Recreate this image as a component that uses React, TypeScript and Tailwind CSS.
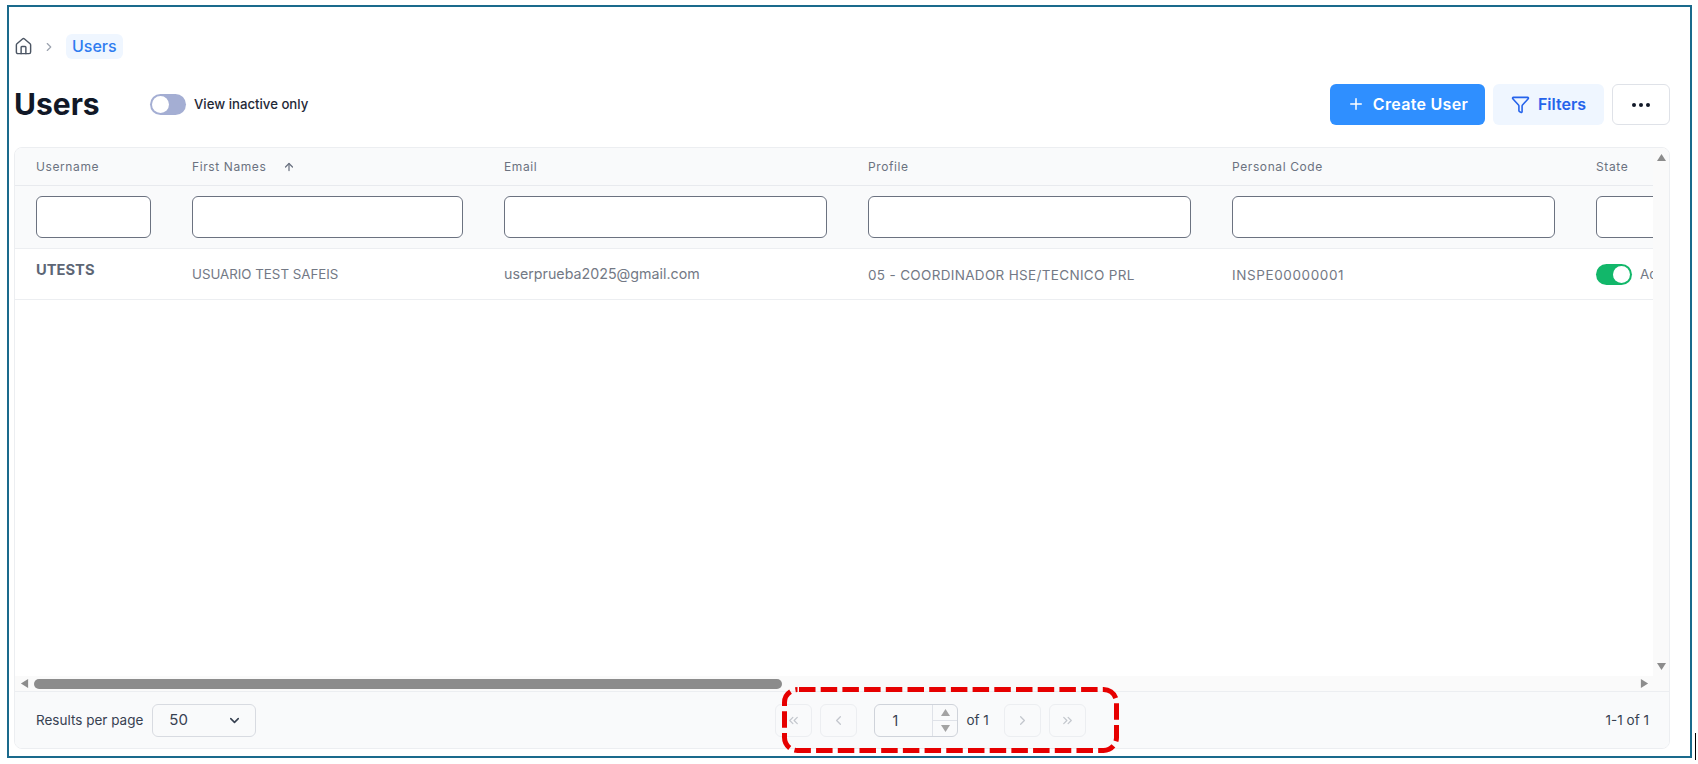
import { ArrowUp, ChevronDown, ChevronLeft, ChevronRight, ChevronsLeft, ChevronsRight, Filter, House, Plus } from "lucide-react";

const columns = [
  { label: "Username", width: "w-[156px]" },
  { label: "First Names", width: "w-[312px]", sorted: true },
  { label: "Email", width: "w-[364px]" },
  { label: "Profile", width: "w-[364px]" },
  { label: "Personal Code", width: "w-[364px]" },
  { label: "State", width: "w-[140px]" },
];

function Triangle({ dir, className }: { dir: "up" | "down" | "left" | "right"; className?: string }) {
  const points = {
    up: "5,1 10,9 0,9",
    down: "0,1 10,1 5,9",
    left: "9,0 9,10 1,5",
    right: "1,0 1,10 9,5",
  }[dir];
  return (
    <svg viewBox="0 0 10 10" className={className}>
      <polygon points={points} fill="currentColor" />
    </svg>
  );
}

function PageButton({ children }: { children: React.ReactNode }) {
  return (
    <button className="flex h-[33px] w-[37px] items-center justify-center rounded-md border border-[#eceef1] text-[#c3c7cd]">
      {children}
    </button>
  );
}

export default function App() {
  return (
    <div className="relative h-[764px] w-[1698px] overflow-hidden bg-white font-['Inter',sans-serif]">
      <div className="ml-[7px] mt-[5px] flex h-[753px] w-[1685px] flex-col border-2 border-[#1a6a8c] pl-[5px] pr-[20px] pt-[27px]">
        <nav className="flex h-[25px] items-center">
          <House size={19} strokeWidth={1.8} className="text-[#4b5563]" />
          <ChevronRight size={14} className="ml-[9px] text-[#9ca3af]" />
          <span className="ml-[10px] rounded-md bg-[#eff6ff] px-[6px] py-[2px] text-[16px] leading-[21px] font-medium text-[#2e7cf0]">
            Users
          </span>
        </nav>

        <div className="mt-[25px] flex h-[41px] items-center justify-between">
          <div className="flex items-center">
            <h1 className="w-[136px] text-[30px] font-bold text-[#111827]">Users</h1>
            <div className="flex h-[21px] w-[36px] items-center rounded-full bg-[#a4aed3] pl-[2px]">
              <div className="h-[17px] w-[17px] rounded-full bg-white" />
            </div>
            <span className="ml-[8px] text-[13.2px] font-medium text-[#1f2937]">View inactive only</span>
          </div>
          <div className="flex gap-[8px]">
            <button className="flex h-[41px] w-[155px] items-center justify-center gap-[8px] rounded-md bg-[#2f8fff] pb-[1px] text-[16px] font-semibold tracking-[0.3px] text-white">
              <Plus size={18} />
              Create User
            </button>
            <button className="flex h-[41px] w-[111px] items-center justify-center gap-[8px] rounded-md bg-[#eff6ff] pb-[1px] text-[16px] font-semibold text-[#2563eb]">
              <Filter size={19} />
              Filters
            </button>
            <button className="flex h-[41px] w-[58px] items-center justify-center gap-[3px] rounded-md border border-[#dfe2e8]">
              <span className="h-[4px] w-[4px] rounded-full bg-[#111827]" />
              <span className="h-[4px] w-[4px] rounded-full bg-[#111827]" />
              <span className="h-[4px] w-[4px] rounded-full bg-[#111827]" />
            </button>
          </div>
        </div>

        <div className="mt-[22px] flex h-[602px] flex-col overflow-hidden rounded-lg border border-[#eceef1]">
          <div className="flex min-h-0 flex-1">
            <div className="min-w-0 flex-1 overflow-hidden">
              <div className="flex h-[38px] w-max items-center border-b border-[#e8eaee] bg-[#f9fafb]">
                {columns.map((c) => (
                  <div key={c.label} className={`${c.width} flex items-center pl-[21px] text-[12px] tracking-[0.6px] text-[#6b7280]`}>
                    {c.label}
                    {c.sorted && <ArrowUp size={12} strokeWidth={2.5} className="ml-[17px] text-[#6b7280]" />}
                  </div>
                ))}
              </div>
              <div className="flex h-[63px] w-max items-center border-b border-[#eceef1] bg-[#f9fafb]">
                {columns.map((c) => (
                  <div key={c.label} className={`${c.width} pl-[21px] pr-[20px]`}>
                    <div className="h-[42px] rounded-md border border-[#6b7280] bg-white" />
                  </div>
                ))}
              </div>
              <div className="flex h-[51px] w-max items-center border-b border-[#eceef1] text-[13.5px] text-[#737985]">
                <div className="w-[156px] pb-[8px] pl-[21px] text-[14.7px] font-bold text-[#5d6675]">UTESTS</div>
                <div className="w-[312px] pl-[21px] pt-[2px] text-[13.3px]">USUARIO TEST SAFEIS</div>
                <div className="w-[364px] pl-[21px] text-[14.25px]">userprueba2025@gmail.com</div>
                <div className="w-[364px] pl-[21px] pt-[2px] tracking-[0.33px]">05 - COORDINADOR HSE/TECNICO PRL</div>
                <div className="w-[364px] pl-[21px] pt-[2px] tracking-[0.6px]">INSPE00000001</div>
                <div className="flex w-[140px] items-center pl-[21px]">
                  <div className="flex h-[21px] w-[36px] shrink-0 items-center justify-end rounded-full bg-[#12b76a] pr-[2px]">
                    <div className="h-[17px] w-[17px] rounded-full bg-white" />
                  </div>
                  <span className="ml-[8px]">Active</span>
                </div>
              </div>
            </div>
            <div className="flex w-[16px] flex-col items-center justify-between bg-[#fafafa] py-[5px] text-[#8c8c8c]">
              <Triangle dir="up" className="h-[9px] w-[9px]" />
              <Triangle dir="down" className="h-[9px] w-[9px]" />
            </div>
          </div>

          <div className="flex h-[16px] items-center border-b border-[#eceef1] bg-[#fafafa] pl-[5px] pr-[20px] text-[#8c8c8c]">
            <Triangle dir="left" className="h-[9px] w-[9px]" />
            <div className="ml-[5px] h-[10px] w-[748px] rounded-full bg-[#8c8c8c]" />
            <Triangle dir="right" className="ml-auto h-[9px] w-[9px]" />
          </div>

          <div className="flex h-[56px] items-center justify-between bg-[#f9fafb] pl-[21px] pr-[20px] text-[13.5px] text-[#374151]">
            <div className="flex items-center gap-[9px]">
              <span>Results per page</span>
              <div className="flex h-[33px] w-[104px] items-center justify-between rounded-md border border-[#d8dbe1] pl-[16px] pr-[13px] text-[15px]">
                50
                <ChevronDown size={15} strokeWidth={2.5} />
              </div>
            </div>
            <div className="flex items-center">
              <PageButton><ChevronsLeft size={15} /></PageButton>
              <div className="ml-[8px]">
                <PageButton><ChevronLeft size={15} /></PageButton>
              </div>
              <div className="ml-[17px] flex h-[33px] w-[84px] rounded-md border border-[#cfd3da]">
                <span className="flex-1 pl-[17px] text-[14px] leading-[31px]">1</span>
                <div className="flex w-[25px] flex-col border-l border-[#dfe2e8] text-[#a3a3a3]">
                  <div className="flex flex-1 items-center justify-center border-b border-[#dfe2e8]">
                    <Triangle dir="up" className="h-[9px] w-[9px]" />
                  </div>
                  <div className="flex flex-1 items-center justify-center">
                    <Triangle dir="down" className="h-[9px] w-[9px]" />
                  </div>
                </div>
              </div>
              <span className="ml-[8px] w-[38px]">of 1</span>
              <PageButton><ChevronRight size={15} /></PageButton>
              <div className="ml-[8px]">
                <PageButton><ChevronsRight size={15} /></PageButton>
              </div>
            </div>
            <span>1-1 of 1</span>
          </div>
        </div>
      </div>

      {/* red callout round the pager */}
      <svg className="absolute left-[782px] top-[687px] h-[66px] w-[337px]" viewBox="0 0 337 66" fill="none">
        <rect x="2.5" y="2.5" width="332" height="61" rx="13" stroke="#e60000" strokeWidth="5" strokeDasharray="16.5 5.2" strokeDashoffset="-1.5" />
      </svg>
      <div className="absolute left-[1695px] top-[733px] h-[27px] w-[1px] bg-black" />
    </div>
  );
}
